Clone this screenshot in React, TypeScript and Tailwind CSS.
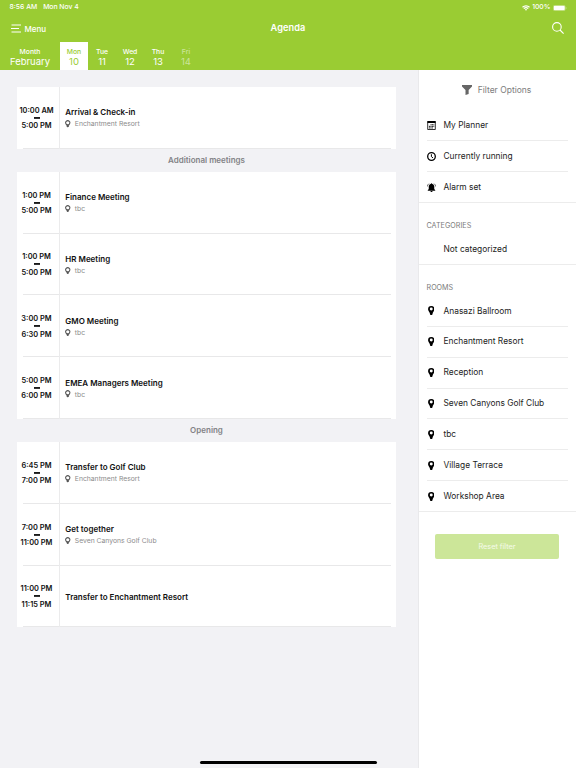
import React from 'react';
import clsx from 'clsx';

interface AgendaEvent {
  start: string;
  end: string;
  title: string;
  location?: string;
}

interface AgendaSection {
  heading?: string;
  events: AgendaEvent[];
}

const days = [
  { name: 'Mon', date: '10', state: 'active' },
  { name: 'Tue', date: '11', state: 'normal' },
  { name: 'Wed', date: '12', state: 'normal' },
  { name: 'Thu', date: '13', state: 'normal' },
  { name: 'Fri', date: '14', state: 'disabled' },
];

const sections: AgendaSection[] = [
  {
    events: [
      { start: '10:00 AM', end: '5:00 PM', title: 'Arrival & Check-in', location: 'Enchantment Resort' },
    ],
  },
  {
    heading: 'Additional meetings',
    events: [
      { start: '1:00 PM', end: '5:00 PM', title: 'Finance Meeting', location: 'tbc' },
      { start: '1:00 PM', end: '5:00 PM', title: 'HR Meeting', location: 'tbc' },
      { start: '3:00 PM', end: '6:30 PM', title: 'GMO Meeting', location: 'tbc' },
      { start: '5:00 PM', end: '6:00 PM', title: 'EMEA Managers Meeting', location: 'tbc' },
    ],
  },
  {
    heading: 'Opening',
    events: [
      { start: '6:45 PM', end: '7:00 PM', title: 'Transfer to Golf Club', location: 'Enchantment Resort' },
      { start: '7:00 PM', end: '11:00 PM', title: 'Get together', location: 'Seven Canyons Golf Club' },
      { start: '11:00 PM', end: '11:15 PM', title: 'Transfer to Enchantment Resort' },
    ],
  },
];

const rooms = [
  'Anasazi Ballroom',
  'Enchantment Resort',
  'Reception',
  'Seven Canyons Golf Club',
  'tbc',
  'Village Terrace',
  'Workshop Area',
];

function PinIcon({ className }: { className?: string }) {
  return (
    <svg viewBox="0 0 12 17" className={className} fill="currentColor" fillRule="evenodd">
      <path d="M6 0a6 6 0 0 0-6 6c0 2.600 2 4.500 2.800 6.500L4.300 17h3.400l1.500-4.500C10 10.500 12 8.600 12 6a6 6 0 0 0-6-6zm0 3a2.800 2.800 0 1 1 0 5.600A2.800 2.800 0 0 1 6 3z" />
    </svg>
  );
}

function OutlinePinIcon({ className }: { className?: string }) {
  return (
    <svg viewBox="0 0 12 16" className={className} fill="none" stroke="currentColor" strokeWidth="2.400">
      <path d="M6 1.200a4.700 4.700 0 0 0-4.700 4.700c0 1.900 1.500 3 2.500 4.600h4.400c1-1.600 2.500-2.700 2.500-4.600A4.700 4.700 0 0 0 6 1.200z" />
      <path d="M3.700 10h4.600v3.500L6 16l-2.300-2.500z" fill="currentColor" stroke="none" />
    </svg>
  );
}

function PlannerIcon() {
  return (
    <svg viewBox="0 0 18 18" className="h-[9px] w-[9px]" fill="none" stroke="currentColor">
      <path d="M.5 0h17v4H.5z" fill="currentColor" stroke="none" />
      <path d="M1.400 3v14h15.200V3" strokeWidth="1.600" />
      <path d="M7 7.500h7.500M3.800 10.700h10.700M3.800 13.900h8" strokeWidth="1.800" strokeDasharray="2.400 .6" />
    </svg>
  );
}

function ClockIcon() {
  return (
    <svg viewBox="0 0 18 18" className="h-[9px] w-[9px]" fill="none" stroke="currentColor" strokeWidth="2.600">
      <circle cx="9" cy="9" r="7.600" />
      <path d="M8.800 4.500v4.700l3.200 2.700" strokeWidth="2" />
    </svg>
  );
}

function AlarmIcon() {
  return (
    <svg viewBox="0 0 18 18" className="h-[9px] w-[9px]" fill="none" stroke="currentColor">
      <path d="M9 .5c.8 0 1.500.6 1.500 1.300 2.500.6 4 2.600 4 5.200v5l2 2.500v1h-15v-1l2-2.500V7c0-2.600 1.500-4.600 4-5.200C7.500 1.100 8.200.5 9 .5zM6.800 16h4.400a2.200 1.800 0 0 1-4.400 0z" fill="currentColor" stroke="none" />
      <path d="M3.900 1.300C2 2.600.8 4.600.7 7M14.100 1.300c1.900 1.300 3.100 3.300 3.200 5.700" strokeWidth="1.200" />
    </svg>
  );
}

const filters = [
  { label: 'My Planner', icon: <PlannerIcon /> },
  { label: 'Currently running', icon: <ClockIcon /> },
  { label: 'Alarm set', icon: <AlarmIcon /> },
];

function StatusBar() {
  return (
    <div className="flex h-[14px] items-center justify-between pt-px pl-[9.500px] pr-[9px] text-[6.800px] font-medium">
      <div className="flex gap-[6px]">
        <span>8:56 AM</span>
        <span>Mon Nov 4</span>
      </div>
      <div className="flex items-center gap-[2.500px]">
        <svg viewBox="0 0 16 12" className="h-[6px] w-2" fill="none" stroke="currentColor" strokeWidth="2.400">
          <path d="M1 4.500a10 10 0 0 1 14 0M3.600 7.200a6.300 6.300 0 0 1 8.800 0" />
          <path d="M5.700 9.200a3.300 3.300 0 0 1 4.600 0L8 11.600z" fill="currentColor" stroke="none" />
        </svg>
        <span>100%</span>
        <svg viewBox="0 0 28 12" className="h-[6px] w-[14px]">
          <rect x=".5" y=".5" width="24" height="11" rx="3" fill="none" stroke="#fff" strokeOpacity=".5" />
          <rect x="1.500" y="1.500" width="22" height="9" rx="2" fill="#fff" />
          <path d="M25.800 4v4c1.600-.6 1.600-3.400 0-4z" fill="#fff" fillOpacity=".6" />
        </svg>
      </div>
    </div>
  );
}

function Header() {
  return (
    <header className="h-[70px] shrink-0 bg-[#9acc33] text-white">
      <StatusBar />
      <div className="grid h-[28px] grid-cols-3 items-center">
        <button className="flex items-center gap-[3.500px] pt-px pl-[11px] text-[8px] font-medium">
          <svg viewBox="0 0 10 9" className="h-[9px] w-[10px]" stroke="currentColor" strokeWidth="1">
            <path d="M.5 1H10M0 4.500h8M.5 8H10" />
          </svg>
          Menu
        </button>
        <h1 className="text-center text-[9.200px] font-semibold tracking-[0.100px]">Agenda</h1>
        <svg viewBox="0 0 12 12" className="mr-[12px] mb-px h-3 w-3 justify-self-end" fill="none" stroke="currentColor" strokeWidth="1.100">
          <circle cx="4.900" cy="4.900" r="4.300" />
          <path d="M8 8l3.600 3.600" />
        </svg>
      </div>
      <div className="flex h-[28px] text-center">
        <div className="flex w-[60px] flex-col items-center pt-[6px]">
          <span className="text-[6.800px] leading-[8px] font-medium">Month</span>
          <span className="text-[9.500px] leading-[11px]">February</span>
        </div>
        {days.map((day) => (
          <div
            key={day.name}
            className={clsx(
              'flex w-[28px] flex-col items-center pt-[6px]',
              day.state === 'active' && 'bg-white text-[#9acc33]',
              day.state === 'disabled' && 'text-white/50'
            )}
          >
            <span className="text-[6.800px] leading-[8px] font-medium">{day.name}</span>
            <span className="text-[9.500px] leading-[11px]">{day.date}</span>
          </div>
        ))}
      </div>
    </header>
  );
}

function EventRow({ event }: { event: AgendaEvent }) {
  return (
    <div className="flex h-[61.800px] bg-white">
      <div className="flex w-[43px] flex-col items-center justify-center border-r border-[#ebebec] pt-[0.300px] pr-[3px] text-[7.400px] leading-[9px] font-semibold text-[#111] whitespace-nowrap">
        <span>{event.start}</span>
        <svg viewBox="0 0 6 2" className="mt-[2px] mb-[2.500px] h-[2px] w-[6px]">
          <path d="M0 .1h6v1.700H0z" fill="#000" />
        </svg>
        <span>{event.end}</span>
      </div>
      <div className="flex flex-1 flex-col justify-center pt-[1.100px] pl-[5.300px]">
        <h3 className="text-[8px] leading-[11px] font-semibold text-[#111]">{event.title}</h3>
        {event.location && (
          <p className="flex items-center text-[6.800px] leading-[11px] text-[#8c8c8c]">
            <OutlinePinIcon className="mr-[4px] h-[7.500px] w-[5.500px] text-[#555]" />
            {event.location}
          </p>
        )}
      </div>
    </div>
  );
}

function AgendaList() {
  return (
    <main className="w-[418px] shrink-0 bg-[#f2f2f5] pt-[17px] pr-[22px] pl-[17px]">
      {sections.map((section, index) => (
        <section key={index}>
          {section.heading && (
            <h2 className="flex h-[23px] items-center justify-center text-[8px] font-semibold text-[#828286]">
              {section.heading}
            </h2>
          )}
          {section.events.map((event) => (
            <div key={event.title} className="bg-white">
              <EventRow event={event} />
              <div className="mx-[5.500px] -mt-px h-px bg-[#e8e8e9]" />
            </div>
          ))}
        </section>
      ))}
    </main>
  );
}

function FilterRow({ label, icon, last }: { label: string; icon?: React.ReactNode; last?: boolean }) {
  return (
    <div className={clsx('h-[30.900px] border-b border-[#ececec]', last ? 'pl-[7.500px]' : 'mr-[8.500px] ml-[7.500px]')}>
      <div className="flex h-full items-center text-[8.400px] text-[#1c1c1c]">
        <span className="mr-2 flex w-[9px] justify-center text-black">{icon}</span>
        {label}
      </div>
    </div>
  );
}

function FilterHeading({ children }: { children: React.ReactNode }) {
  return <h2 className="flex h-[31px] items-end pb-[3px] pl-[7.500px] text-[7.200px] leading-[10px] text-[#7b7b7b]">{children}</h2>;
}

function FilterPanel() {
  return (
    <aside className="flex-1 border-l border-[#e9e9eb] bg-white">
      <div className="flex h-[40.300px] items-center justify-center gap-[5.500px] pr-[1.500px] text-[8.500px] text-[#7d7d7d]">
        <svg viewBox="0 0 20 20" className="h-[10px] w-[10px] text-[#666]" fill="currentColor">
          <path d="M0 0h20v3L13.300 10v8L7 20V10L0 3z" />
        </svg>
        Filter Options
      </div>
      {filters.map((filter, index) => (
        <FilterRow key={filter.label} {...filter} last={index === filters.length - 1} />
      ))}
      <FilterHeading>CATEGORIES</FilterHeading>
      <FilterRow label="Not categorized" last />
      <FilterHeading>ROOMS</FilterHeading>
      {rooms.map((room, index) => (
        <FilterRow
          key={room}
          label={room}
          icon={<PinIcon className="h-[9px] w-[6.500px]" />}
          last={index === rooms.length - 1}
        />
      ))}
      <button className="mt-[22px] ml-4 block h-[25px] w-[124px] rounded-[2px] bg-[#cce699] pt-px text-[7.300px] text-white/80">
        Reset filter
      </button>
    </aside>
  );
}

export default function App() {
  return (
    <div className="relative flex h-[768px] w-[576px] flex-col overflow-hidden font-['Inter',sans-serif]">
      <Header />
      <div className="flex flex-1">
        <AgendaList />
        <FilterPanel />
      </div>
      {/* Home indicator */}
      <div className="absolute bottom-[4.500px] left-[199.500px] h-[3px] w-[177px] rounded-full bg-black" />
    </div>
  );
}
